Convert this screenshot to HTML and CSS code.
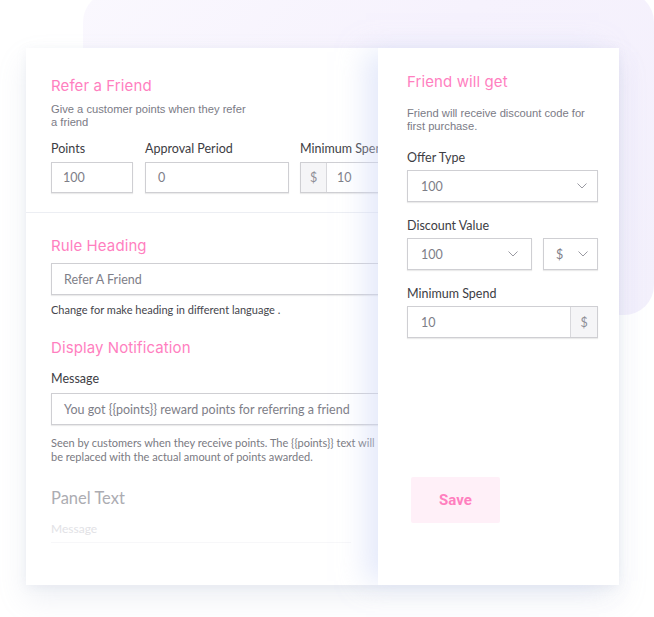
FILE: index.html
```html
<!DOCTYPE html>
<html lang="en">
<head>
<meta charset="utf-8">
<title>Refer a Friend</title>
<link rel="stylesheet" href="styles.css">
</head>
<body>
<div class="blob"></div>
<main class="card">
  <section class="left">
    <div class="sec sec1">
      <h2 class="title">Refer a Friend</h2>
      <p class="sub">Give a customer points when they refer<br>a friend</p>
      <div class="row3">
        <div class="field w-points">
          <div class="label">Points</div>
          <div class="input">100</div>
        </div>
        <div class="field w-approval">
          <div class="label">Approval Period</div>
          <div class="input">0</div>
        </div>
        <div class="field w-min">
          <div class="label">Minimum Spend</div>
          <div class="input group"><span class="addon addon-l">$</span><span class="val">10</span></div>
        </div>
      </div>
    </div>
    <div class="sec sec2">
      <h2 class="title">Rule Heading</h2>
      <div class="input wide mt8">Refer A Friend</div>
      <p class="help dark">Change for make heading in different language .</p>
      <h2 class="title mt23">Display Notification</h2>
      <div class="label mt14">Message</div>
      <div class="input wide mt7">You got {{points}} reward points for referring a friend</div>
      <p class="help light">Seen by customers when they receive points. The {{points}} text will<br>be replaced with the actual amount of points awarded.</p>
      <h3 class="panel-title">Panel Text</h3>
      <div class="faint">Message</div>
    </div>
  </section>
  <section class="right">
    <h2 class="title">Friend will get</h2>
    <p class="sub rsub">Friend will receive discount code for<br>first purchase.</p>
    <div class="label rl1">Offer Type</div>
    <div class="input select full">
      <span>100</span>
      <svg class="chev" width="10" height="6" viewBox="0 0 10 6"><polyline points="0.5,0.5 5,5 9.5,0.5" fill="none" stroke="#9a9aa2" stroke-width="1"/></svg>
    </div>
    <div class="label rl2">Discount Value</div>
    <div class="pair">
      <div class="input select s1">
        <span>100</span>
        <svg class="chev" width="10" height="6" viewBox="0 0 10 6"><polyline points="0.5,0.5 5,5 9.5,0.5" fill="none" stroke="#9a9aa2" stroke-width="1"/></svg>
      </div>
      <div class="input select s2">
        <span>$</span>
        <svg class="chev" width="10" height="6" viewBox="0 0 10 6"><polyline points="0.5,0.5 5,5 9.5,0.5" fill="none" stroke="#9a9aa2" stroke-width="1"/></svg>
      </div>
    </div>
    <div class="label rl2">Minimum Spend</div>
    <div class="input group full r-min"><span class="val">10</span><span class="addon addon-r">$</span></div>
    <button class="save">Save</button>
  </section>
</main>
</body>
</html>
```
FILE: styles.css
```css
* { box-sizing: border-box; }
html, body { margin: 0; padding: 0; background: #ffffff; }
body {
  width: 654px;
  height: 617px;
  overflow: hidden;
  position: relative;
  font-family: "Lato", "Liberation Sans", sans-serif;
}
.blob {
  position: absolute;
  left: 83px;
  top: -8px;
  width: 571px;
  height: 323px;
  border-radius: 30px;
  background: linear-gradient(135deg, #faf8fe 0%, #f6f2fd 45%, #f3f0fc 100%);
}
.card {
  position: relative;
  margin: 48px 0 0 26px;
  width: 593px;
  height: 537px;
  background: #ffffff;
  display: grid;
  grid-template-columns: 352px 241px;
  box-shadow: 0 14px 28px rgba(150, 160, 190, 0.16), 0 2px 10px rgba(150, 160, 190, 0.10);
}
.left {
  overflow: hidden;
  background: #fff;
}
.sec { padding-left: 25px; }
.sec1 {
  padding-top: 29px;
  padding-bottom: 19px;
  border-bottom: 1px solid #eceef3;
}
.sec2 { padding-top: 24px; }
.title {
  margin: 0;
  font-family: "Inter", "Lato", sans-serif;
  font-weight: 400;
  font-size: 15px;
  line-height: 18px;
  color: #ff7fbf;
  letter-spacing: 0.1px;
  white-space: nowrap;
}
.sub {
  margin: 8px 0 0;
  font-family: "Liberation Sans", Arial, sans-serif;
  font-size: 11.2px;
  line-height: 12.5px;
  color: #7b7b86;
  white-space: nowrap;
}
.label {
  font-size: 12.5px;
  line-height: 15px;
  color: #3d3d44;
  white-space: nowrap;
}
.row3 {
  display: flex;
  margin-top: 13px;
}
.field { flex-shrink: 0; }
.field .input { margin-top: 6px; }
.w-points { width: 82px; margin-right: 12px; }
.w-approval { width: 144px; margin-right: 11px; }
.w-min { width: 130px; }
.input {
  height: 31px;
  border: 1px solid #cfcfd3;
  box-shadow: 0 1px 1px rgba(0, 0, 0, 0.08);
  background: #fff;
  display: flex;
  align-items: center;
  padding-left: 12px;
  font-size: 12.5px;
  color: #7e7e88;
  white-space: nowrap;
}
.w-points .input { padding-left: 11px; }
.group { padding-left: 0; }
.addon {
  width: 26px;
  align-self: stretch;
  display: flex;
  align-items: center;
  justify-content: center;
  background: #f5f5f7;
  color: #8e8e96;
}
.addon-l { border-right: 1px solid #d8d8dc; }
.addon-r { border-left: 1px solid #d8d8dc; }
.group .val { padding-left: 10px; flex: 1; }
.wide { width: 340px; height: 32px; }
.mt8 { margin-top: 8px; }
.mt7 { margin-top: 7px; }
.mt14 { margin-top: 14px; }
.mt23 { margin-top: 23px; }
.help {
  margin: 9px 0 0;
  font-size: 11px;
  line-height: 12px;
  white-space: nowrap;
}
.help.dark { color: #45454c; }
.help.light { color: #7a7a82; margin-top: 11px; line-height: 14px; }
.panel-title {
  margin: 25px 0 0;
  font-size: 16.5px;
  line-height: 18px;
  font-weight: 400;
  color: #acacb2;
}
.faint {
  margin-top: 15px;
  width: 300px;
  font-size: 12px;
  line-height: 14px;
  color: #e2e2e6;
  padding-bottom: 6px;
  border-bottom: 1px solid #f7f7f9;
}
.right {
  position: relative;
  background: #fff;
  padding: 25px 21px 0 29px;
  box-shadow: -16px 0 26px -4px rgba(205, 215, 245, 0.55);
}
.rsub { margin-top: 16px; line-height: 13px; }
.rl1 { margin-top: 17px; }
.rl2 { margin-top: 16px; }
.select {
  height: 32px;
  margin-top: 5px;
  justify-content: space-between;
  padding-right: 10px;
  padding-left: 13px;
}
.full { width: 191px; }
.pair { display: flex; gap: 11px; margin-top: 5px; }
.pair .select { margin-top: 0; }
.s1 { width: 125px; padding-right: 13px; }
.s2 { width: 55px; padding-left: 12px; padding-right: 9px; }
.chev { display: block; }
.r-min { height: 32px; margin-top: 5px; }
.r-min .val { padding-left: 13px; }
.r-min .addon { width: 27px; }
.save {
  display: flex;
  align-items: center;
  justify-content: center;
  margin: 139px 0 0 4px;
  width: 89px;
  height: 46px;
  border: 0;
  border-radius: 2px;
  background: #fff0f8;
  color: #ff7fbf;
  font-family: "Roboto", "Liberation Sans", sans-serif;
  font-weight: 700;
  font-size: 15px;
  padding: 0;
}
```
